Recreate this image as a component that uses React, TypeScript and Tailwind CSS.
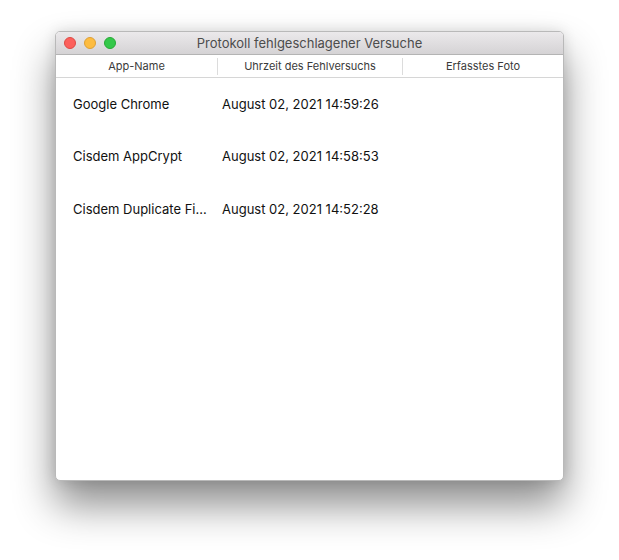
const rows = [
  { app: "Google Chrome", time: "August 02, 2021 14:59:26" },
  { app: "Cisdem AppCrypt", time: "August 02, 2021 14:58:53" },
  { app: "Cisdem Duplicate Fi...", time: "August 02, 2021 14:52:28" },
];

const columns = ["App-Name", "Uhrzeit des Fehlversuchs", "Erfasstes Foto"];

const App = () => {
  return (
    <div className="w-[619px] h-[560px] bg-white pt-[31px] pl-[55px] font-['Inter','Liberation_Sans',sans-serif]">
      <div className="w-[509px] h-[450px] flex flex-col rounded-[5px] overflow-hidden bg-white border border-[#b9b9b9] shadow-[0_24px_40px_rgba(0,0,0,0.45),0_0_14px_rgba(0,0,0,0.12)]">
        {/* title bar */}
        <div className="relative h-[23px] flex items-center justify-center bg-gradient-to-b from-[#ebe9eb] to-[#d5d3d5] border-b border-[#b4b4b4]">
          <div className="absolute left-[8px] top-[5px] flex gap-[8px]">
            <span className="w-[12px] h-[12px] rounded-full bg-[#fc605c] border border-[#de4a44]" />
            <span className="w-[12px] h-[12px] rounded-full bg-[#fdbc40] border border-[#dea034]" />
            <span className="w-[12px] h-[12px] rounded-full bg-[#34c84a] border border-[#27aa35]" />
          </div>
          <span className="text-[13px] text-[#4c4c4c] leading-none">
            Protokoll fehlgeschlagener Versuche
          </span>
        </div>

        {/* header */}
        <div className="grid grid-cols-[162px_185px_1fr] h-[23px] border-b border-[#d6d6d6] text-[11px] text-[#3a3a3a]">
          {columns.map((col, i) => (
            <div
              key={col}
              className={`flex items-center justify-center ${
                i < 2 ? "border-r border-[#dcdcdc] my-[3px]" : ""
              }`}
            >
              {col}
            </div>
          ))}
        </div>

        {/* rows */}
        <div className="flex flex-col">
          {rows.map((row) => (
            <div
              key={row.time}
              className="grid grid-cols-[162px_185px_1fr] h-[52.5px] items-center text-[13px] text-[#111]"
            >
              <div className="pl-[17px] whitespace-nowrap">{row.app}</div>
              <div className="pl-[4px] whitespace-nowrap">{row.time}</div>
              <div />
            </div>
          ))}
        </div>
      </div>
    </div>
  );
};

export default App;
